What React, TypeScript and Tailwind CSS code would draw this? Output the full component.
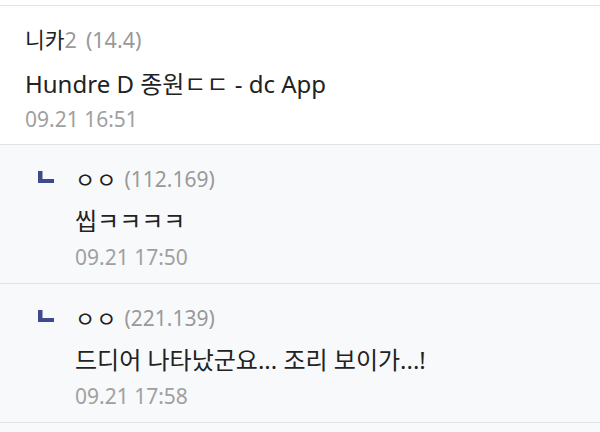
const font = { fontFamily: '"Noto Sans", "Noto Sans CJK KR", sans-serif' }

interface Reply {
  name: string
  ip: string
  text: string
  date: string
}

const replies: Reply[] = [
  { name: 'ㅇㅇ', ip: '(112.169)', text: '씹ㅋㅋㅋㅋ', date: '09.21 17:50' },
  { name: 'ㅇㅇ', ip: '(221.139)', text: '드디어 나타났군요... 조리 보이가...!', date: '09.21 17:58' },
]

const ReplyMark = () => (
  <svg width="16" height="12" viewBox="0 0 16 12" className="shrink-0">
    <path d="M0 0 H4.5 V8 H16 V12 H0 Z" fill="#3f4a8c" />
  </svg>
)

export default function App() {
  return (
    <div className="w-[600px] h-[432px] bg-[#f8f9fb] overflow-hidden" style={font}>
      <div className="h-[5px] bg-white" />
      <div className="bg-white border-t border-b border-[#e3e4e8] px-[25px] pt-[19px] pb-[10px]">
        <div className="flex items-center leading-[30px] text-[21.5px]">
          <span className="text-[#1e1e1e]">니카</span>
          <span className="text-[#999]">2</span>
          <span className="text-[#999] ml-[9px]">(14.4)</span>
        </div>
        <div className="mt-[14px] leading-[30px] text-[24px] text-[#222]">Hundre D 종원ㄷㄷ - dc App</div>
        <div className="mt-[5px] leading-[30px] text-[21px] text-[#a0a0a0]">09.21 16:51</div>
      </div>
      {replies.map((r, i) => (
        <div key={i} className="border-b border-[#e3e4e8] flex pl-[38px] pt-[19px] pb-[11px]">
          <div className="pt-[7px]">
            <ReplyMark />
          </div>
          <div className="ml-[21px]">
            <div className="flex items-center leading-[30px] text-[21px]">
              <span className="text-[#1e1e1e] text-[22px] tracking-[1px]">{r.name}</span>
              <span className="text-[#999] ml-[7px]">{r.ip}</span>
            </div>
            <div className="mt-[12px] leading-[30px] text-[24px] text-[#222]">{r.text}</div>
            <div className="mt-[6px] leading-[30px] text-[21px] text-[#a0a0a0]">{r.date}</div>
          </div>
        </div>
      ))}
    </div>
  )
}
